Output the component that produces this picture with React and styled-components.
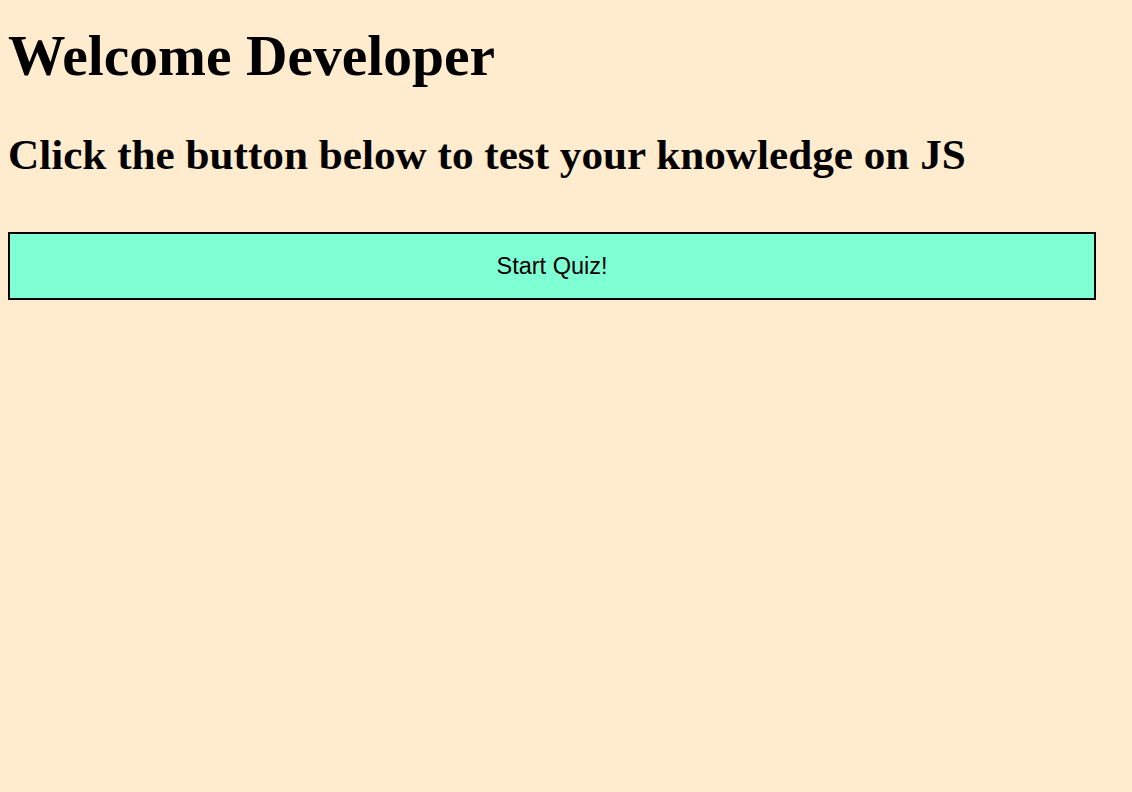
import React from "react";
import styled, { createGlobalStyle } from "styled-components";

const GlobalStyle = createGlobalStyle`
  html, body {
    margin: 0;
    padding: 0;
    background: #ffebcd;
  }
  body {
    font-family: "Liberation Serif", "Times New Roman", serif;
    color: #000;
  }
`;

const Page = styled.main`
  display: flex;
  flex-direction: column;
  align-items: flex-start;
  padding: 24px 8px 8px;
  min-height: 792px;
  box-sizing: border-box;
`;

const Title = styled.h1`
  margin: 0;
  font-family: "Liberation Serif", "Times New Roman", serif;
  font-size: 57.5px;
  font-weight: bold;
  line-height: 64px;
  white-space: nowrap;
`;

const Subtitle = styled.h2`
  margin: 42px 0 0;
  font-family: "Liberation Serif", "Times New Roman", serif;
  font-size: 43.2px;
  font-weight: bold;
  line-height: 49px;
  white-space: nowrap;
`;

const StartButton = styled.button`
  margin-top: 53px;
  width: 1088px;
  height: 68px;
  box-sizing: border-box;
  background: #7fffd4;
  border: 2px solid #000;
  border-radius: 0;
  font-family: "Liberation Sans", Arial, sans-serif;
  font-size: 23.5px;
  color: #000;
  cursor: pointer;
  padding: 0;
`;

export default function App() {
  return (
    <>
      <GlobalStyle />
      <Page>
        <Title>Welcome Developer</Title>
        <Subtitle>Click the button below to test your knowledge on JS</Subtitle>
        <StartButton type="button">Start Quiz!</StartButton>
      </Page>
    </>
  );
}
